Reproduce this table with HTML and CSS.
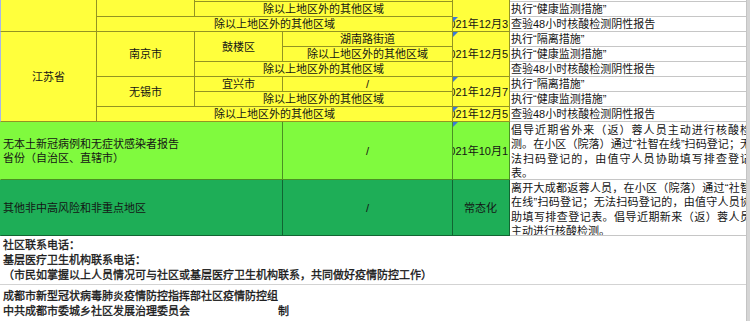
FILE: index.html
```html
<!DOCTYPE html>
<html lang="zh-CN">
<head>
<meta charset="utf-8">
<title>疫情防控措施表</title>
<link rel="stylesheet" href="styles.css">
</head>
<body>
<div class="page">
  <div class="sheet">
    <table class="grid">
      <colgroup>
        <col class="c1"><col class="c2"><col class="c3"><col class="c4"><col class="c5"><col class="c6">
      </colgroup>
      <tbody>
        <tr class="r0">
          <td class="y edge" rowspan="3"></td>
          <td class="y" rowspan="2"></td>
          <td class="y" colspan="2"></td>
          <td class="y date nb" rowspan="2"></td>
          <td class="w"></td>
        </tr>
        <tr class="r15">
          <td class="y" colspan="2">除以上地区外的其他区域</td>
          <td class="w">执行“健康监测措施”</td>
        </tr>
        <tr class="r15">
          <td class="y" colspan="3">除以上地区外的其他区域</td>
          <td class="y date cm"><div class="dt"><span>2021年12月3</span></div></td>
          <td class="w">查验48小时核酸检测阴性报告</td>
        </tr>
        <tr class="r15">
          <td class="y edge" rowspan="6">江苏省</td>
          <td class="y" rowspan="3">南京市</td>
          <td class="y" rowspan="2">鼓楼区</td>
          <td class="y">湖南路街道</td>
          <td class="y date cm" rowspan="3"><div class="dt"><span>2021年12月5</span></div></td>
          <td class="w">执行“隔离措施”</td>
        </tr>
        <tr class="r15">
          <td class="y">除以上地区外的其他区域</td>
          <td class="w">执行“健康监测措施”</td>
        </tr>
        <tr class="r15">
          <td class="y" colspan="2">除以上地区外的其他区域</td>
          <td class="w">查验48小时核酸检测阴性报告</td>
        </tr>
        <tr class="r15">
          <td class="y" rowspan="2">无锡市</td>
          <td class="y">宜兴市</td>
          <td class="y">/</td>
          <td class="y date cm" rowspan="2"><div class="dt"><span>2021年12月7</span></div></td>
          <td class="w">执行“隔离措施”</td>
        </tr>
        <tr class="r15">
          <td class="y" colspan="2">除以上地区外的其他区域</td>
          <td class="w">执行“健康监测措施”</td>
        </tr>
        <tr class="r15">
          <td class="y" colspan="3">除以上地区外的其他区域</td>
          <td class="y date cm"><div class="dt"><span>2021年12月5</span></div></td>
          <td class="w">查验48小时核酸检测阴性报告</td>
        </tr>
        <tr class="lg">
          <td class="gl name" colspan="3">无本土新冠病例和无症状感染者报告<br>省份（自治区、直辖市）</td>
          <td class="gl">/</td>
          <td class="gl date cm"><div class="dt"><span>2021年10月1</span></div></td>
          <td class="w top"><div class="wrap lgw">倡导近期省外来（返）蓉人员主动进行核酸检测。在小区（院落）通过“社智在线”扫码登记；无法扫码登记的，由值守人员协助填写排查登记表。</div></td>
        </tr>
        <tr class="dg">
          <td class="gd name" colspan="3">其他非中高风险和非重点地区</td>
          <td class="gd">/</td>
          <td class="gd date">常态化</td>
          <td class="w top"><div class="wrap dgw">离开大成都返蓉人员，在小区（院落）通过“社智在线”扫码登记；无法扫码登记的，由值守人员协助填写排查登记表。倡导近期新来（返）蓉人员主动进行核酸检测。</div></td>
        </tr>
      </tbody>
    </table>
    <div class="notes">
      <div class="block contact">
        <p>社区联系电话：</p>
        <p>基层医疗卫生机构联系电话：</p>
        <p>（市民如掌握以上人员情况可与社区或基层医疗卫生机构联系，共同做好疫情防控工作）</p>
      </div>
      <div class="block issuer">
        <p>成都市新型冠状病毒肺炎疫情防控指挥部社区疫情防控组</p>
        <p>中共成都市委城乡社区发展治理委员会<span class="sign">制</span></p>
      </div>
    </div>
  </div>
  <div class="scrollbar"></div>
</div>
</body>
</html>
```

FILE: styles.css
```css
* { box-sizing: border-box; }
html, body { margin: 0; padding: 0; background: #ffffff; }
body {
  font-family: "Liberation Sans", "Noto Sans CJK SC", sans-serif;
  font-size: 11px;
  color: #141414;
}
.page { display: flex; width: 750px; height: 321px; overflow: hidden; }
.sheet { width: 746px; flex: none; overflow: hidden; background: #ffffff; }
.scrollbar { width: 4px; flex: none; background: #d5d5d5; border-left: 1px solid #c4c4c4; }

.grid {
  width: 760px;
  table-layout: fixed;
  border-collapse: separate;
  border-spacing: 0;
}
.grid col.c1 { width: 97px; }
.grid col.c2 { width: 98px; }
.grid col.c3 { width: 88px; }
.grid col.c4 { width: 170px; }
.grid col.c5 { width: 57px; }
.grid col.c6 { width: 250px; }

.grid td {
  padding: 0 1px;
  border-right: 1px solid rgba(0, 0, 0, 0.42);
  border-bottom: 1px solid rgba(0, 0, 0, 0.42);
  line-height: 14px;
  white-space: nowrap;
  overflow: hidden;
  text-align: center;
  vertical-align: middle;
}
.r0 { height: 2px; }
.r15 { height: 15px; }
.lg { height: 58px; }
.dg { height: 56px; }

.grid td.y { background: #ffff3c; }
.grid td.gl { background: #80fa3e; }
.grid td.gd { background: #1eae57; }
.grid td.edge { border-left: 1px solid #a9b6e6; }
.grid td.nb { border-bottom: none; }
.grid td.w {
  background: #ffffff;
  text-align: left;
  border-bottom-color: #c6c6c6;
  border-right-color: #c6c6c6;
}
.grid td.top { vertical-align: top; }
.grid td.name {
  text-align: left;
  padding-left: 2px;
  border-left: 1px solid transparent;
}

.grid td.date { padding: 0 1px 0 0; }
.grid td.cm { position: relative; }
.grid td.cm::before {
  content: "";
  position: absolute;
  top: 0;
  left: 0;
  border-top: 5px solid #3b7ad8;
  border-right: 5px solid transparent;
}
.dt {
  display: flex;
  justify-content: flex-end;
  overflow: hidden;
  white-space: nowrap;
}
.dt span { flex: none; }

.wrap {
  width: 240px;
  padding-top: 1px;
  white-space: normal;
  text-align: justify;
  line-height: 14.4px;
  overflow: hidden;
}
.lgw { height: 57px; }
.dgw { height: 55px; }

.notes { width: 746px; }
.block { padding-left: 3px; }
.block p {
  margin: 0;
  line-height: 15px;
  font-weight: 400;
  -webkit-text-stroke: 0.3px currentColor;
  white-space: nowrap;
}
.contact { padding-top: 2px; padding-bottom: 1px; height: 49px; border-bottom: 1px solid #d3d3d3; }
.issuer { padding-top: 4px; }
.sign { margin-left: 88px; }
```
